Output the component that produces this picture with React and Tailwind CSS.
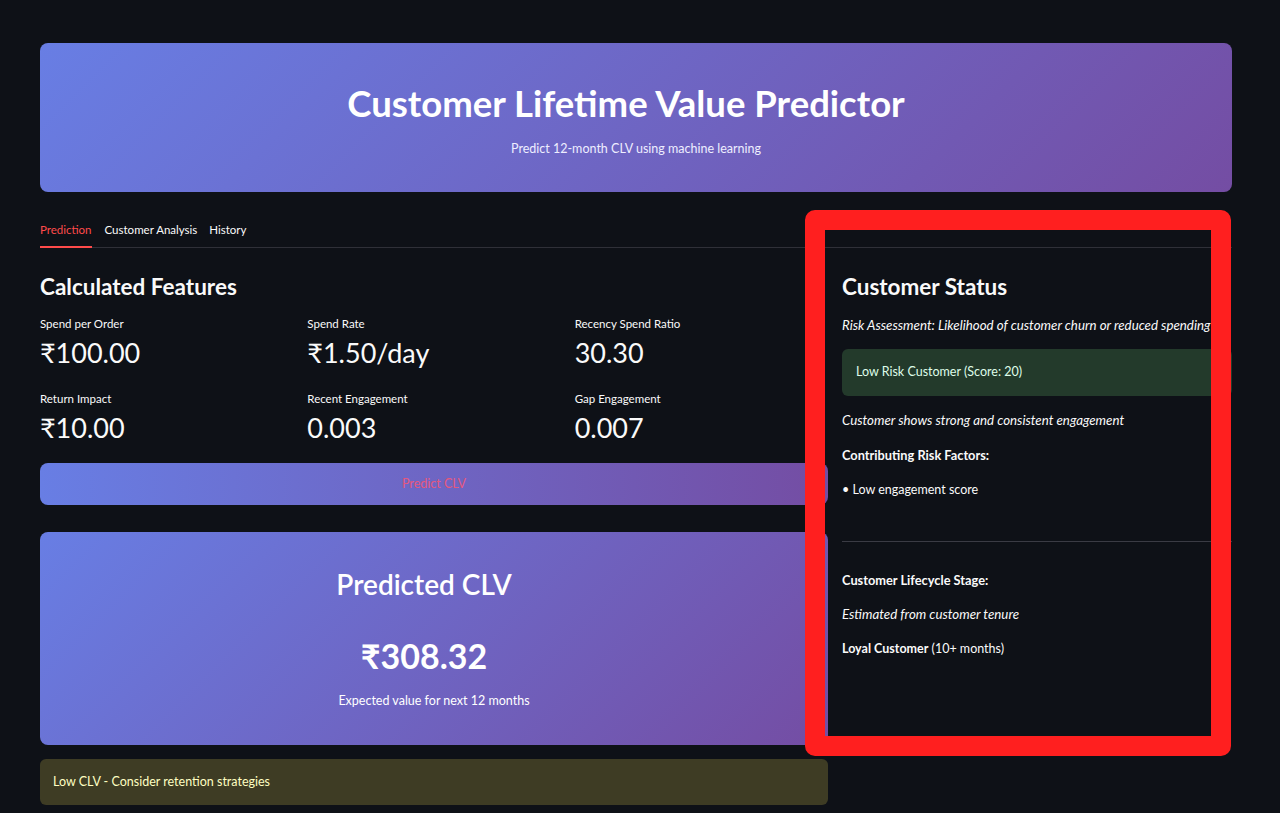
import React from 'react';

const font = { fontFamily: 'Lato, "Noto Sans", sans-serif' };

const features = [
  { label: 'Spend per Order', value: '₹100.00' },
  { label: 'Spend Rate', value: '₹1.50/day' },
  { label: 'Recency Spend Ratio', value: '30.30' },
  { label: 'Return Impact', value: '₹10.00' },
  { label: 'Recent Engagement', value: '0.003' },
  { label: 'Gap Engagement', value: '0.007' },
];

const Metric = ({ label, value }) => (
  <div className="flex flex-col">
    <div className="h-[16px] leading-[16px] text-[11.5px] text-[#fafafa]">{label}</div>
    <div className="mt-[3px] h-[36px] leading-[36px] text-[27px] text-[#fafafa]">{value}</div>
  </div>
);

const App = () => {
  return (
    <div className="relative min-h-[813px] w-full overflow-hidden bg-[#0e1117] text-[#fafafa]" style={font}>
      <div className="w-[1192px] ml-[40px] pt-[43px]">
        {/* banner */}
        <div className="h-[149px] rounded-[8px] bg-[linear-gradient(135deg,#687ee4_0%,#744da3_100%)] flex flex-col items-center">
          <h1 className="mt-[40px] pr-[20px] h-[40px] leading-[40px] text-[36.5px] font-bold text-white">Customer Lifetime Value Predictor</h1>
          <p className="mt-[18px] h-[16px] leading-[16px] text-[12.5px] text-[#eeeeff]">Predict 12-month CLV using machine learning</p>
        </div>

        {/* tabs */}
        <div className="mt-[30px] flex border-b border-[#2f3038] h-[26px]">
          <div className="relative mr-[13px] h-full text-[11.5px] leading-[16px] text-[#ff4b4b]">
            Prediction
            <div className="absolute left-0 right-0 bottom-[-1px] h-[2px] bg-[#ff4b4b]" />
          </div>
          <div className="mr-[12px] text-[11.5px] leading-[16px]">Customer Analysis</div>
          <div className="text-[11.5px] leading-[16px]">History</div>
        </div>

        <div className="flex gap-[14px]">
          {/* left column */}
          <div className="w-[788px] flex flex-col">
            <h3 className="mt-[24px] h-[30px] leading-[30px] text-[22.5px] font-bold">Calculated Features</h3>
            <div className="mt-[14px] grid grid-cols-3 gap-x-[14px] gap-y-[20px]">
              {features.map((f) => (
                <Metric key={f.label} label={f.label} value={f.value} />
              ))}
            </div>
            <button className="mt-[17px] h-[42px] w-full rounded-[8px] bg-[linear-gradient(90deg,#687ee4_0%,#744da3_100%)] text-[12.5px] text-[#e5587e]">
              Predict CLV
            </button>
            <div className="mt-[27px] h-[213px] rounded-[8px] bg-[linear-gradient(135deg,#687ee4_0%,#744da3_100%)] flex flex-col items-center">
              <div className="mt-[34px] pr-[20px] h-[36px] leading-[36px] text-[28px] font-semibold text-white">Predicted CLV</div>
              <div className="mt-[32px] pr-[20px] h-[44px] leading-[44px] text-[34px] font-bold text-white">₹308.32</div>
              <div className="mt-[14px] h-[18px] leading-[18px] text-[12.5px] text-white">Expected value for next 12 months</div>
            </div>
            <div className="mt-[14px] h-[46px] rounded-[6px] bg-[#3e3c24] flex items-center px-[13px] text-[12.5px] text-[#ffffc2]">
              Low CLV - Consider retention strategies
            </div>
          </div>

          {/* right column */}
          <div className="flex-1 flex flex-col">
            <h3 className="mt-[24px] h-[30px] leading-[30px] text-[22.5px] font-bold">Customer Status</h3>
            <p className="mt-[14px] h-[18px] leading-[18px] text-[13.3px] italic whitespace-nowrap">
              Risk Assessment: Likelihood of customer churn or reduced spending
            </p>
            <div className="mt-[15px] h-[47px] rounded-[6px] bg-[#233a2b] flex items-center px-[14px] text-[12.5px] text-[#dffde9]">
              Low Risk Customer (Score: 20)
            </div>
            <p className="mt-[15px] h-[18px] leading-[18px] text-[13.3px] italic">Customer shows strong and consistent engagement</p>
            <p className="mt-[17px] h-[18px] leading-[18px] text-[12.8px] font-bold">Contributing Risk Factors:</p>
            <p className="mt-[17px] h-[18px] leading-[18px] text-[12.5px]">• Low engagement score</p>
            <div className="mt-[42px] h-px bg-[#3a3b44]" />
            <p className="mt-[29px] h-[18px] leading-[18px] text-[12.8px] font-bold">Customer Lifecycle Stage:</p>
            <p className="mt-[16px] h-[18px] leading-[18px] text-[13.3px] italic">Estimated from customer tenure</p>
            <p className="mt-[17px] h-[18px] leading-[18px] text-[12.5px]">
              <span className="font-bold">Loyal Customer</span> (10+ months)
            </p>
          </div>
        </div>
      </div>

      {/* red annotation frame */}
      <div className="absolute left-[805px] top-[210px] w-[426px] h-[546px] border-[20px] border-[#ff1f1f] rounded-[10px] pointer-events-none" />
    </div>
  );
};

export default App;
